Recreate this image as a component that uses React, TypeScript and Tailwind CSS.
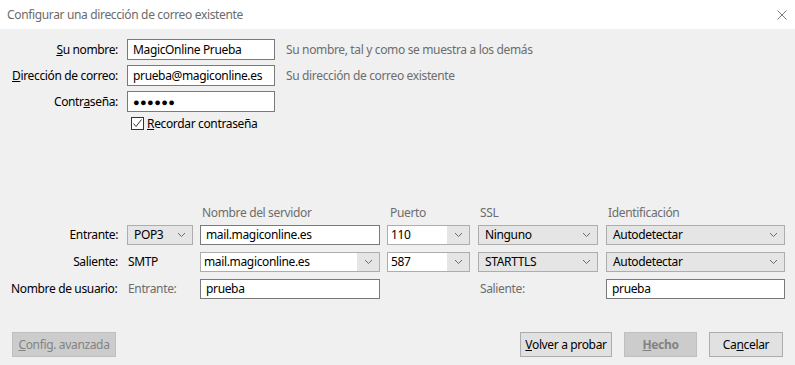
import React from "react";

const font = { fontFamily: '"Noto Sans", "Open Sans", sans-serif' };

// small dropdown chevron
function Chevron() {
  return (
    <svg width="9" height="6" viewBox="0 0 9 6" className="shrink-0">
      <polyline points="1,1 4.5,4.5 8,1" fill="none" stroke="#6a6a6a" strokeWidth="1" />
    </svg>
  );
}

function TextBox({ value, className = "" }: { value: React.ReactNode; className?: string }) {
  return (
    <div className={`flex items-center bg-white border border-[#7a7a7a] pl-[5px] text-black whitespace-nowrap overflow-hidden ${className}`}>
      {value}
    </div>
  );
}

function Select({ value, className = "" }: { value: string; className?: string }) {
  return (
    <div className={`flex items-center justify-between bg-[#e5e5e5] border border-[#adadad] pl-[6px] pr-[6px] text-black ${className}`}>
      <span>{value}</span>
      <Chevron />
    </div>
  );
}

function Combo({ value, className = "" }: { value: string; className?: string }) {
  return (
    <div className={`flex items-stretch border border-[#adadad] ${className}`}>
      <div className="flex-1 flex items-center bg-white pl-[3px] text-black">{value}</div>
      <div className="w-[22px] flex items-center justify-center bg-[#e5e5e5]">
        <Chevron />
      </div>
    </div>
  );
}

function Button({ children, disabled = false, className = "" }: { children: React.ReactNode; disabled?: boolean; className?: string }) {
  return (
    <div
      className={`h-[25px] flex items-center justify-center border ${
        disabled ? "bg-[#cccccc] border-[#bfbfbf] text-[#838383]" : "bg-[#e1e1e1] border-[#adadad] text-black"
      } ${className}`}
    >
      {children}
    </div>
  );
}

export default function App() {
  return (
    <div
      className="w-[795px] h-[365px] bg-[#f0f0f0] flex flex-col text-[12px] leading-none tracking-[-0.35px] text-black whitespace-nowrap"
      style={font}
    >
      {/* Title bar */}
      <div className="h-[29px] bg-white flex items-center justify-between pl-[7px] pr-[8px]">
        <span className="text-[#6b6b6b]">Configurar una dirección de correo existente</span>
        <svg width="10" height="10" viewBox="0 0 10 10">
          <path d="M0.5 0.5 L9.5 9.5 M9.5 0.5 L0.5 9.5" stroke="#7a7a7a" strokeWidth="1" />
        </svg>
      </div>

      {/* Account fields */}
      <div className="pt-[10px] flex flex-col gap-[5px]">
        <div className="flex items-center h-[21px]">
          <div className="w-[118px] text-right">
            <u>S</u>u nombre:
          </div>
          <TextBox value="MagicOnline Prueba" className="ml-[9px] w-[148px] h-[21px]" />
          <span className="ml-[11px] text-[#6d6d6d]">Su nombre, tal y como se muestra a los demás</span>
        </div>
        <div className="flex items-center h-[21px]">
          <div className="w-[118px] text-right">
            <u>D</u>irección de correo:
          </div>
          <TextBox value="prueba@magiconline.es" className="ml-[9px] w-[148px] h-[21px]" />
          <span className="ml-[11px] text-[#6d6d6d]">Su dirección de correo existente</span>
        </div>
        <div className="flex items-center h-[21px]">
          <div className="w-[118px] text-right">
            Contr<u>a</u>seña:
          </div>
          <TextBox
            value={<span className="text-[11px] tracking-[0.4px]">●●●●●●</span>}
            className="ml-[9px] w-[148px] h-[21px]"
          />
        </div>
      </div>
      <div className="mt-[4px] h-[15px] flex items-center pl-[131px]">
        <div className="w-[13px] h-[13px] border border-[#333333] bg-white flex items-center justify-center">
          <svg width="11" height="11" viewBox="0 0 11 11">
            <polyline points="1.5,5.5 4,8.5 9.5,1.5" fill="none" stroke="#333333" strokeWidth="1" />
          </svg>
        </div>
        <span className="ml-[3px]">
          <u>R</u>ecordar contraseña
        </span>
      </div>

      {/* Server settings */}
      <div className="mt-[74px] flex flex-col">
        <div className="h-[16px] flex items-center text-[#6d6d6d]">
          <div className="w-[202px]" />
          <div className="w-[188px]">Nombre del servidor</div>
          <div className="w-[90px]">Puerto</div>
          <div className="w-[128px]">SSL</div>
          <div>Identificación</div>
        </div>
        <div className="mt-[4px] flex flex-col gap-[7px]">
          <div className="h-[20px] flex items-stretch">
            <div className="w-[118px] text-right self-center">Entrante:</div>
            <Select value="POP3" className="ml-[9px] w-[66px]" />
            <TextBox value="mail.magiconline.es" className="ml-[7px] w-[180px] pl-[3px]" />
            <Combo value="110" className="ml-[7px] w-[83px]" />
            <Select value="Ninguno" className="ml-[8px] w-[120px]" />
            <Select value="Autodetectar" className="ml-[8px] w-[179px]" />
          </div>
          <div className="h-[20px] flex items-stretch">
            <div className="w-[118px] text-right self-center">Saliente:</div>
            <div className="ml-[10px] w-[65px] self-center">SMTP</div>
            <Combo value="mail.magiconline.es" className="ml-[7px] w-[180px]" />
            <Combo value="587" className="ml-[7px] w-[83px]" />
            <Select value="STARTTLS" className="ml-[8px] w-[120px]" />
            <Select value="Autodetectar" className="ml-[8px] w-[179px]" />
          </div>
          <div className="h-[20px] flex items-stretch">
            <div className="pl-[11px] w-[118px] self-center">Nombre de usuario:</div>
            <div className="ml-[10px] w-[65px] self-center text-[#6d6d6d]">Entrante:</div>
            <TextBox value="prueba" className="ml-[7px] w-[180px] pl-[3px]" />
            <div className="ml-[100px] w-[126px] self-center text-[#6d6d6d]">Saliente:</div>
            <TextBox value="prueba" className="w-[179px] pl-[3px]" />
          </div>
        </div>
      </div>

      {/* Footer buttons */}
      <div className="mt-[33px] flex items-center px-[12px]">
        <Button disabled className="w-[104px]">
          <span>
            <u>C</u>onfig. avanzada
          </span>
        </Button>
        <div className="flex-1" />
        <Button className="w-[92px]">
          <span>
            <u>V</u>olver a probar
          </span>
        </Button>
        <Button disabled className="ml-[12px] w-[73px] font-bold">
          <span>
            <u>H</u>echo
          </span>
        </Button>
        <Button className="ml-[12px] w-[74px]">
          <span>
            Ca<u>n</u>celar
          </span>
        </Button>
      </div>
    </div>
  );
}
